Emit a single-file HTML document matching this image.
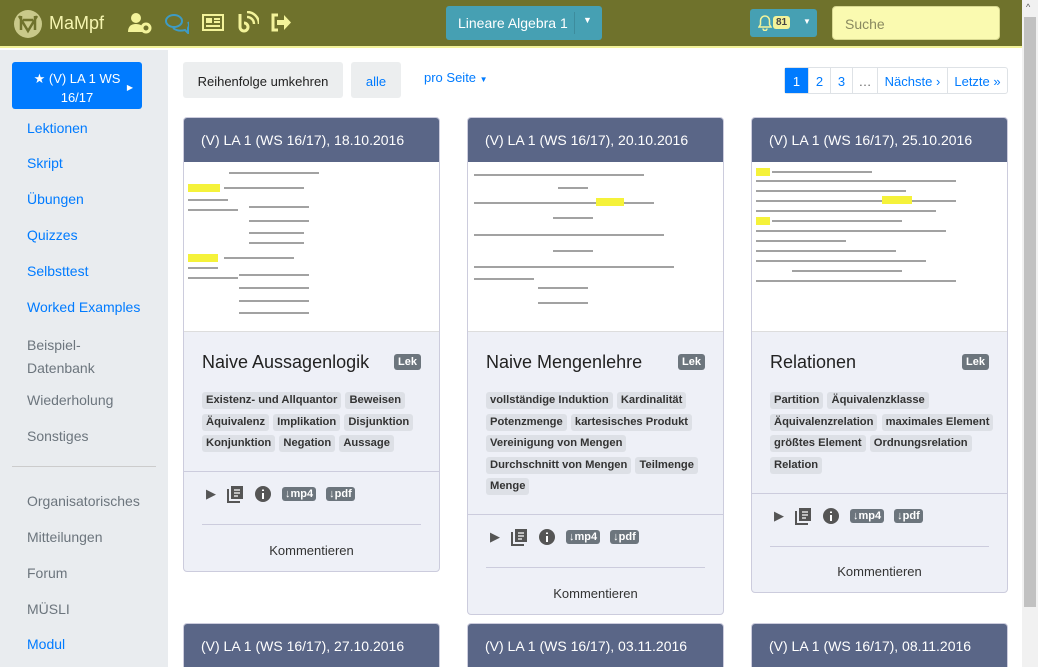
<!DOCTYPE html>
<html><head><meta charset="utf-8"><style>
*{box-sizing:border-box;margin:0;padding:0}
html,body{width:1038px;height:667px;overflow:hidden}
body{font-family:"Liberation Sans",sans-serif;background:#fff;position:relative}
.nav{position:absolute;left:0;top:0;width:1022px;height:48px;background:#6f722c;border-bottom:2px solid #f3f39a}
.scroll{position:absolute;left:1022px;top:0;width:16px;height:667px;background:#f1f1f1}
.scroll div{position:absolute;left:2px;top:17px;width:12px;height:590px;background:#c1c1c1}
.side{position:absolute;left:0;top:50px;width:168px;height:617px;background:#e9ecef}
.side a{position:absolute;left:27px;font-size:14px;color:#007bff}
.side a.g{color:#6c757d}
.card{position:absolute;width:257px;border:1px solid #ccd;border-radius:4px;background:#eef0f7;overflow:hidden}
.ch{height:44px;background:#5a6687;color:#fff;font-size:14px;padding:14px 17px}
.th{height:170px;background:#fff;position:relative;border-bottom:1px solid #ddd}
.th i{position:absolute;height:2px;background:#555;opacity:.55}
.th b{position:absolute;height:8px;background:#f5f23a}
.title{font-size:18px;color:#222;position:absolute;left:18px}
.lek{position:absolute;right:18px;background:#6c757d;color:#fff;font-size:11px;font-weight:bold;padding:2px 4px;border-radius:3px}
.tags{position:absolute;left:18px;right:2px;font-size:11.2px;font-weight:bold;color:#333;line-height:17px;word-spacing:1px}
.tags span{display:inline-block;background:#dde0e6;border-radius:3px;padding:0 4px;line-height:17px;margin:0 0 4.6px 0;word-spacing:0}
.hr{position:absolute;left:0;right:0;height:1px;background:#ccd}
.hr2{position:absolute;left:18px;right:18px;height:1px;background:#ccd}
.icons{position:absolute;left:22px;display:flex;align-items:center;gap:10px}
.dl{background:#6c757d;color:#fff;font-size:11px;font-weight:bold;padding:1px 3px;border-radius:3px}
.kom{position:absolute;left:0;right:0;text-align:center;font-size:13px;color:#333}
</style></head><body>
<div class="nav">
 <svg style="position:absolute;left:13px;top:9px" width="30" height="30"><circle cx="15" cy="15" r="14" fill="#c9c98a"/><path d="M6 7 L15 22 L24 7 M8 7v14 M22 7v14 M10 11 h10" stroke="#6f722c" stroke-width="2.5" fill="none"/></svg>
 <span style="position:absolute;left:49px;top:13px;font-size:18px;color:#f5f5b0">MaMpf</span>
 <svg style="position:absolute;left:128px;top:12px" width="26" height="22"><circle cx="8" cy="6" r="5" fill="#f3f39a"/><path d="M0 20 q0-8 8-8 q5 0 7 3 v5z" fill="#f3f39a"/><circle cx="18" cy="16" r="4" fill="none" stroke="#f3f39a" stroke-width="3"/></svg>
 <svg style="position:absolute;left:165px;top:12px" width="24" height="22"><ellipse cx="9" cy="9" rx="8" ry="6" fill="none" stroke="#3e9bc4" stroke-width="2"/><path d="M8 16 q5 4 12 2 l3 3 v-5 q2-3 0-6" fill="none" stroke="#3e9bc4" stroke-width="2"/></svg>
 <svg style="position:absolute;left:202px;top:14px" width="22" height="18"><rect x="1" y="1" width="20" height="15" fill="none" stroke="#f3f39a" stroke-width="2"/><rect x="4" y="4" width="6" height="5" fill="#f3f39a"/><path d="M12 5h6M12 8h6M4 12h14" stroke="#f3f39a" stroke-width="2"/></svg>
 <svg style="position:absolute;left:237px;top:11px" width="22" height="22"><path d="M3 3v13a4 4 0 1 0 4-4" fill="none" stroke="#f3f39a" stroke-width="3"/><path d="M10 6a7 7 0 0 1 7 7M10 1a12 12 0 0 1 12 12" fill="none" stroke="#f3f39a" stroke-width="2.5"/></svg>
 <svg style="position:absolute;left:270px;top:13px" width="22" height="20"><path d="M8 2H3v15h5" fill="none" stroke="#f3f39a" stroke-width="3"/><path d="M7 7h7V2l7 7.5-7 7.5v-5H7z" fill="#f3f39a"/></svg>
 <div style="position:absolute;left:446px;top:6px;width:156px;height:34px;background:#46a0b3;border-radius:3px;color:#fff;font-size:14px;padding:9px 12px">Lineare Algebra 1<span style="position:absolute;left:137px;top:9px;font-size:9px">▼</span><span style="position:absolute;left:128px;top:6px;width:1px;height:22px;background:#3d8c9d"></span></div>
 <div style="position:absolute;left:750px;top:9px;width:67px;height:28px;background:#46a0b3;border-radius:3px">
  <svg style="position:absolute;left:8px;top:6px" width="14" height="16"><path d="M7 1a4.5 4.5 0 0 0-4.5 4.5v4L1 12h12l-1.5-2.5v-4A4.5 4.5 0 0 0 7 1zM5 13.5a2 2 0 0 0 4 0" fill="none" stroke="#f3f39a" stroke-width="1.5"/></svg>
  <span style="position:absolute;left:23px;top:7px;background:#f3f39a;color:#444;font-size:10px;font-weight:bold;padding:1px 3px;border-radius:3px">81</span>
  <span style="position:absolute;left:53px;top:8px;font-size:8px;color:#fff">▼</span></div>
 <div style="position:absolute;left:832px;top:6px;width:168px;height:34px;background:#fafab0;border:1px solid #d8d890;border-radius:4px;font-size:14px;color:#8a8a60;padding:9px 12px">Suche</div>
</div>
<div class="scroll"><div></div><span style="position:absolute;left:4px;top:2px;font-size:9px;color:#555">^</span></div>
<div class="side">
 <div style="position:absolute;left:12px;top:12px;width:130px;height:47px;background:#007bff;border-radius:3px;color:#fff;font-size:13px;text-align:center;padding:7px 10px;line-height:19px">★ (V) LA 1 WS<br>16/17<span style="position:absolute;right:9px;top:16px;font-size:8px">▶</span></div>
 <a style="top:70px">Lektionen</a><a style="top:105px">Skript</a><a style="top:141px">Übungen</a><a style="top:177px">Quizzes</a><a style="top:213px">Selbsttest</a><a style="top:249px">Worked Examples</a>
 <a class="g" style="top:284px;line-height:23px">Beispiel-<br>Datenbank</a><a class="g" style="top:342px">Wiederholung</a><a class="g" style="top:378px">Sonstiges</a>
 <div style="position:absolute;left:12px;width:144px;top:416px;height:1px;background:#ccc"></div>
 <a class="g" style="top:443px">Organisatorisches</a><a class="g" style="top:479px">Mitteilungen</a><a class="g" style="top:515px">Forum</a><a class="g" style="top:551px">MÜSLI</a><a style="top:586px">Modul</a>
</div>
<div class="main">
 <div style="position:absolute;left:183px;top:62px;width:160px;height:36px;background:#eceeef;border-radius:3px;font-size:13px;color:#222;text-align:center;padding-top:12px">Reihenfolge umkehren</div>
 <div style="position:absolute;left:351px;top:62px;width:50px;height:36px;background:#eceeef;border-radius:3px;font-size:13px;color:#007bff;text-align:center;padding-top:12px">alle</div>
 <div style="position:absolute;left:424px;top:70px;font-size:13px;color:#007bff">pro Seite <span style="font-size:8px">▼</span></div>
 <div style="position:absolute;left:784px;top:67px;height:27px;display:flex;font-size:13px;color:#007bff;border:1px solid #dee2e6;border-radius:3px">
  <span style="width:23px;background:#007bff;color:#fff;text-align:center;padding-top:6px">1</span>
  <span style="width:22px;border-left:1px solid #dee2e6;text-align:center;padding-top:6px">2</span>
  <span style="width:22px;border-left:1px solid #dee2e6;text-align:center;padding-top:6px">3</span>
  <span style="width:25px;border-left:1px solid #dee2e6;text-align:center;padding-top:6px;color:#666">…</span>
  <span style="width:70px;border-left:1px solid #dee2e6;text-align:center;padding-top:6px">Nächste ›</span>
  <span style="width:60px;border-left:1px solid #dee2e6;text-align:center;padding-top:6px">Letzte »</span>
 </div>
</div>

<div class="card" style="left:183px;top:117px;height:455px">
 <div class="ch">(V) LA 1 (WS 16/17), 18.10.2016</div>
 <div class="th"><i style="left:45px;top:10px;width:90px"></i><b style="left:4px;top:22px;width:32px"></b><i style="left:40px;top:25px;width:80px"></i><i style="left:4px;top:37px;width:40px"></i><i style="left:4px;top:47px;width:50px"></i><i style="left:65px;top:44px;width:60px"></i><i style="left:65px;top:58px;width:60px"></i><i style="left:65px;top:70px;width:55px"></i><i style="left:65px;top:80px;width:55px"></i><b style="left:4px;top:92px;width:30px"></b><i style="left:40px;top:95px;width:70px"></i><i style="left:4px;top:105px;width:30px"></i><i style="left:4px;top:115px;width:50px"></i><i style="left:55px;top:112px;width:70px"></i><i style="left:55px;top:125px;width:70px"></i><i style="left:55px;top:138px;width:70px"></i><i style="left:55px;top:150px;width:70px"></i></div>
 <div class="title" style="top:234px">Naive Aussagenlogik</div><div class="lek" style="top:236px">Lek</div>
 <div class="tags" style="top:274px"><span>Existenz- und Allquantor</span> <span>Beweisen</span> <span>Äquivalenz</span> <span>Implikation</span> <span>Disjunktion</span> <span>Konjunktion</span> <span>Negation</span> <span>Aussage</span></div>
 <div class="hr" style="top:353px"></div>
 <div class="icons" style="top:367px"><span style="color:#555;font-size:13px">▶</span><svg width="18" height="18"><rect x="5" y="1" width="12" height="13" fill="#555"/><path d="M8 5h6M8 8h6M8 11h4" stroke="#fff" stroke-width="1.3"/><path d="M2 4v13h12" fill="none" stroke="#555" stroke-width="2"/></svg><svg width="18" height="18"><circle cx="9" cy="9" r="8" fill="#555"/><path d="M9 8v6M9 4.5v1.5" stroke="#fff" stroke-width="2"/></svg><span class="dl">↓mp4</span><span class="dl">↓pdf</span></div>
 <div class="hr2" style="top:406px"></div>
 <div class="kom" style="top:425px">Kommentieren</div>
</div>
<div class="card" style="left:467px;top:117px;height:498px">
 <div class="ch">(V) LA 1 (WS 16/17), 20.10.2016</div>
 <div class="th"><i style="left:6px;top:12px;width:170px"></i><i style="left:90px;top:25px;width:30px"></i><i style="left:6px;top:40px;width:180px"></i><b style="left:128px;top:36px;width:28px"></b><i style="left:85px;top:55px;width:40px"></i><i style="left:6px;top:72px;width:190px"></i><i style="left:85px;top:88px;width:40px"></i><i style="left:6px;top:104px;width:200px"></i><i style="left:6px;top:116px;width:60px"></i><i style="left:70px;top:125px;width:50px"></i><i style="left:70px;top:140px;width:50px"></i></div>
 <div class="title" style="top:234px">Naive Mengenlehre</div><div class="lek" style="top:236px">Lek</div>
 <div class="tags" style="top:274px"><span>vollständige Induktion</span> <span>Kardinalität</span> <span>Potenzmenge</span> <span>kartesisches Produkt</span><br><span>Vereinigung von Mengen</span><br><span>Durchschnitt von Mengen</span> <span>Teilmenge</span> <span>Menge</span></div>
 <div class="hr" style="top:396px"></div>
 <div class="icons" style="top:410px"><span style="color:#555;font-size:13px">▶</span><svg width="18" height="18"><rect x="5" y="1" width="12" height="13" fill="#555"/><path d="M8 5h6M8 8h6M8 11h4" stroke="#fff" stroke-width="1.3"/><path d="M2 4v13h12" fill="none" stroke="#555" stroke-width="2"/></svg><svg width="18" height="18"><circle cx="9" cy="9" r="8" fill="#555"/><path d="M9 8v6M9 4.5v1.5" stroke="#fff" stroke-width="2"/></svg><span class="dl">↓mp4</span><span class="dl">↓pdf</span></div>
 <div class="hr2" style="top:449px"></div>
 <div class="kom" style="top:468px">Kommentieren</div>
</div>
<div class="card" style="left:751px;top:117px;height:476px">
 <div class="ch">(V) LA 1 (WS 16/17), 25.10.2016</div>
 <div class="th"><b style="left:4px;top:6px;width:14px"></b><i style="left:20px;top:9px;width:100px"></i><i style="left:4px;top:18px;width:200px"></i><i style="left:4px;top:28px;width:150px"></i><i style="left:4px;top:38px;width:200px"></i><b style="left:130px;top:34px;width:30px"></b><i style="left:4px;top:48px;width:180px"></i><b style="left:4px;top:55px;width:14px"></b><i style="left:20px;top:58px;width:130px"></i><i style="left:4px;top:68px;width:190px"></i><i style="left:4px;top:78px;width:90px"></i><i style="left:4px;top:88px;width:140px"></i><i style="left:4px;top:98px;width:170px"></i><i style="left:40px;top:108px;width:110px"></i><i style="left:4px;top:118px;width:200px"></i></div>
 <div class="title" style="top:234px">Relationen</div><div class="lek" style="top:236px">Lek</div>
 <div class="tags" style="top:274px;right:-20px"><span>Partition</span> <span>Äquivalenzklasse</span><br><span>Äquivalenzrelation</span> <span>maximales Element</span><br><span>größtes Element</span> <span>Ordnungsrelation</span><br><span>Relation</span></div>
 <div class="hr" style="top:375px"></div>
 <div class="icons" style="top:389px"><span style="color:#555;font-size:13px">▶</span><svg width="18" height="18"><rect x="5" y="1" width="12" height="13" fill="#555"/><path d="M8 5h6M8 8h6M8 11h4" stroke="#fff" stroke-width="1.3"/><path d="M2 4v13h12" fill="none" stroke="#555" stroke-width="2"/></svg><svg width="18" height="18"><circle cx="9" cy="9" r="8" fill="#555"/><path d="M9 8v6M9 4.5v1.5" stroke="#fff" stroke-width="2"/></svg><span class="dl">↓mp4</span><span class="dl">↓pdf</span></div>
 <div class="hr2" style="top:428px"></div>
 <div class="kom" style="top:446px">Kommentieren</div>
</div>
<div class="card" style="left:183px;top:623px;height:60px"><div class="ch">(V) LA 1 (WS 16/17), 27.10.2016</div></div>
<div class="card" style="left:467px;top:623px;height:60px"><div class="ch">(V) LA 1 (WS 16/17), 03.11.2016</div></div>
<div class="card" style="left:751px;top:623px;height:60px"><div class="ch">(V) LA 1 (WS 16/17), 08.11.2016</div></div>
</body></html>
